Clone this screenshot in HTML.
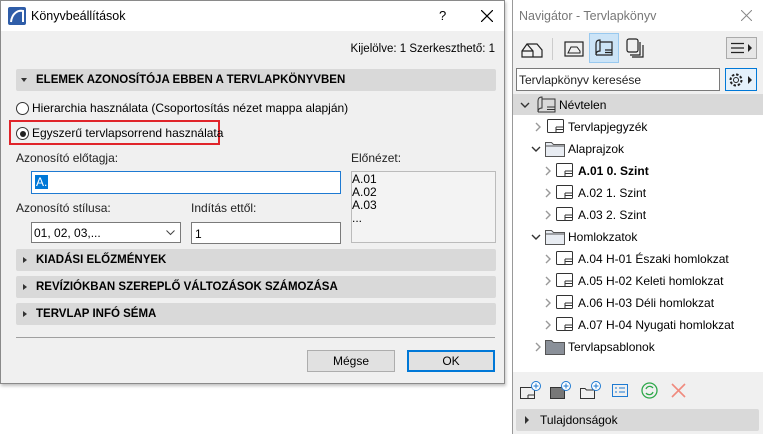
<!DOCTYPE html>
<html><head><meta charset="utf-8"><style>
*{box-sizing:border-box;margin:0;padding:0}
body{width:763px;height:434px;background:#fff;position:relative;overflow:hidden;font-family:"Liberation Sans",sans-serif;font-size:12px;color:#000}
.a{position:absolute}
.t{position:absolute;white-space:nowrap;line-height:14px}
.sec{position:absolute;left:16px;width:480px;height:22px;background:#d9d9d9;border-radius:2px;font-weight:bold;font-size:11.5px;line-height:22px;padding-left:20px}
.tri{position:absolute;left:7px;top:8px;width:0;height:0;border-top:3px solid transparent;border-bottom:3px solid transparent;border-left:4px solid #333}
.trd{position:absolute;left:5px;top:9px;width:0;height:0;border-left:3.5px solid transparent;border-right:3.5px solid transparent;border-top:4px solid #333}
.row{position:absolute;height:22px;line-height:22px;white-space:nowrap;font-size:12px}
</style></head><body>
<svg width="0" height="0" style="position:absolute"><defs>
<symbol id="pg" viewBox="0 0 17 15"><rect x="0.5" y="0.5" width="16" height="13" rx="1" stroke="#333" fill="#fff"/><path d="M9 8H16.5M9 10.5H16.5M9 8V13.5" stroke="#333" fill="none"/></symbol>
<symbol id="fd" viewBox="0 0 20 16"><path d="M0.5 15.5V1.5H6.5L8.5 3.5H19.5V15.5Z M0.5 5H19.5" stroke="#555" fill="#e8ecf2"/></symbol>
<symbol id="cr" viewBox="0 0 8 10"><path d="M2 1L6 5L2 9" stroke="#999" stroke-width="1.4" fill="none"/></symbol>
<symbol id="cd" viewBox="0 0 10 8"><path d="M1 2L5 6L9 2" stroke="#333" stroke-width="1.4" fill="none"/></symbol>
</defs></svg>
<!-- Dialog -->
<div class="a" style="left:0;top:0;width:505px;height:384px;border:1px solid #8a8a8a;background:#f0f0f0;box-shadow:1px 2px 3px rgba(0,0,0,.25)"></div>
<div class="a" style="left:1px;top:1px;width:503px;height:30px;background:#fff"></div>
<svg class="a" style="left:8px;top:7px" width="18" height="18"><rect width="18" height="18" rx="2" fill="#2f5da8"/><path d="M3 15 C4 6 10 3 15 4 L15 15" stroke="#fff" stroke-width="2" fill="none"/></svg>
<div class="t" style="left:31px;top:9px;font-size:12.5px">Könyvbeállítások</div>
<div class="t" style="left:439px;top:9px;font-size:13px">?</div>
<svg class="a" style="left:481px;top:10px" width="12" height="12"><path d="M0 0L12 12M12 0L0 12" stroke="#000" stroke-width="1.2"/></svg>
<div class="t" style="right:268px;top:42px;font-size:11.5px">Kijelölve: 1 Szerkeszthető: 1</div>
<div class="sec" style="top:69px"><div class="trd"></div>ELEMEK AZONOSÍTÓJA EBBEN A TERVLAPKÖNYVBEN</div>
<div class="a" style="left:16px;top:102px;width:13px;height:13px;border:1px solid #333;border-radius:50%;background:#fff"></div>
<div class="t" style="left:32px;top:101px;font-size:12px">Hierarchia használata (Csoportosítás nézet mappa alapján)</div>
<div class="a" style="left:9px;top:120px;width:211px;height:25px;border:2px solid #e0242a"></div>
<div class="a" style="left:16px;top:127px;width:13px;height:13px;border:1px solid #333;border-radius:50%;background:#fff"></div>
<div class="a" style="left:19.5px;top:130.5px;width:6px;height:6px;border-radius:50%;background:#222"></div>
<div class="t" style="left:32px;top:126px;font-size:12px">Egyszerű tervlapsorrend használata</div>
<div class="t" style="left:16px;top:151px;color:#222">Azonosító előtagja:</div>
<div class="t" style="left:351px;top:151px;color:#222">Előnézet:</div>
<div class="a" style="left:31px;top:171px;width:310px;height:23px;border:1px solid #1e7ad2;background:#fff"></div>
<div class="t" style="left:35px;top:175px;background:#0078d7;color:#fff;padding:0 1px">A.</div>
<div class="a" style="left:351px;top:171px;width:145px;height:72px;border:1px solid #bbb;background:#f3f3f3"></div>
<div class="t" style="left:352px;top:173px;line-height:13px">A.01<br>A.02<br>A.03<br>...</div>
<div class="t" style="left:16px;top:201px;color:#222">Azonosító stílusa:</div>
<div class="t" style="left:191px;top:201px;color:#222">Indítás ettől:</div>
<div class="a" style="left:31px;top:222px;width:150px;height:21px;border:1px solid #7a7a7a;background:#fff"></div>
<div class="t" style="left:34px;top:226px">01, 02, 03,...</div>
<svg class="a" style="left:166px;top:230px" width="9" height="6"><path d="M0.5 0.5L4.5 4.5L8.5 0.5" stroke="#444" fill="none"/></svg>
<div class="a" style="left:191px;top:222px;width:150px;height:22px;border:1px solid #7a7a7a;background:#fff"></div>
<div class="t" style="left:195px;top:227px">1</div>
<div class="sec" style="top:249px"><div class="tri"></div>KIADÁSI ELŐZMÉNYEK</div>
<div class="sec" style="top:276px"><div class="tri"></div>REVÍZIÓKBAN SZEREPLŐ VÁLTOZÁSOK SZÁMOZÁSA</div>
<div class="sec" style="top:303px"><div class="tri"></div>TERVLAP INFÓ SÉMA</div>
<div class="a" style="left:16px;top:337px;width:479px;height:1px;background:#a0a0a0"></div>
<div class="a" style="left:307px;top:350px;width:88px;height:22px;border:1px solid #adadad;background:#e1e1e1;text-align:center;line-height:20px">Mégse</div>
<div class="a" style="left:407px;top:350px;width:88px;height:22px;border:2px solid #0078d7;background:#e1e1e1;text-align:center;line-height:18px">OK</div>

<!-- Navigator -->
<div class="a" style="left:512px;top:0;width:251px;height:434px;border-left:1px solid #999;background:#f0f0f0"></div>
<div class="a" style="left:513px;top:0;width:250px;height:31px;background:#fff"></div>
<div class="t" style="left:519px;top:9px;font-size:12.5px;color:#777">Navigátor - Tervlapkönyv</div>
<svg class="a" style="left:741px;top:10px" width="11" height="11"><path d="M0 0L11 11M11 0L0 11" stroke="#888" stroke-width="1"/></svg>
<svg class="a" style="left:521px;top:40px" width="22" height="18"><path d="M1 11 L6 4 L16 4 L21 10 L21 17 L1 17 Z M6 4 L12 11 L12 17 M1 11 L12 11" stroke="#222" fill="none" stroke-width="1.2"/></svg>
<div class="a" style="left:552px;top:38px;width:1px;height:22px;background:#ccc"></div>
<svg class="a" style="left:564px;top:40px" width="20" height="18"><rect x="1" y="2" width="18" height="14" stroke="#222" fill="none" stroke-width="1.2"/><path d="M4 13 L7 7 L13 7 L16 11 L16 13 Z" stroke="#222" fill="none"/></svg>
<div class="a" style="left:589px;top:33px;width:30px;height:30px;background:#cce4f7;border:1px solid #99c9ef"></div>
<svg class="a" style="left:594px;top:39px" width="20" height="18"><path d="M2 16 L2 5 Q2 1 6 1 L6 12 Q2 12 2 16 Z M6 3 L18 3 L18 16 L2 16 M11 11 L18 11 M11 13.5 L18 13.5" stroke="#222" fill="none" stroke-width="1.2"/></svg>
<svg class="a" style="left:626px;top:38px" width="18" height="20"><rect x="1" y="1" width="11" height="13" rx="2" stroke="#222" fill="none" stroke-width="1.2"/><path d="M4 17 L14 17 L14 4 M6 19 L17 19 L17 7" stroke="#222" fill="none" stroke-width="1.2"/></svg>
<div class="a" style="left:726px;top:37px;width:31px;height:22px;border:1px solid #aaa;background:#e6e6e6"></div>
<svg class="a" style="left:731px;top:42px" width="22" height="12"><path d="M0 1.5H13M0 6H13M0 10.5H13" stroke="#222" stroke-width="1.2"/><path d="M17 2L21 6L17 10Z" fill="#222"/></svg>
<div class="a" style="left:516px;top:68px;width:204px;height:23px;border:1px solid #7a7a7a;background:#fff"></div>
<div class="t" style="left:519px;top:73px;color:#222">Tervlapkönyv keresése</div>
<div class="a" style="left:725px;top:68px;width:32px;height:23px;border:1px solid #0078d7;background:#e5f1fb"></div>
<svg class="a" style="left:728px;top:71px" width="27" height="18"><circle cx="8" cy="9" r="5.5" stroke="#222" fill="none" stroke-dasharray="2.5 1.8" stroke-width="2"/><circle cx="8" cy="9" r="2.5" stroke="#222" fill="none"/><path d="M20 5L24 9L20 13Z" fill="#222"/></svg>
<div class="a" style="left:513px;top:94px;width:250px;height:278px;background:#fff"></div>
<div class="a" style="left:513px;top:94px;width:250px;height:21px;background:#d9d9d9"></div>
<svg class="a" style="left:520px;top:101px" width="10" height="8"><use href="#cd"/></svg>
<svg class="a" style="left:536px;top:96px" width="20" height="17"><path d="M2 16 L2 5 Q2 1 6 1 L6 12 Q2 12 2 16 Z M6 3 L19 3 L19 16 L2 16 M11 11 L19 11 M11 13.5 L19 13.5" stroke="#333" fill="none"/></svg>
<div class="row" style="left:559px;top:94px">Névtelen</div>
<svg class="a" style="left:534px;top:122px" width="8" height="10"><use href="#cr"/></svg>
<svg class="a" style="left:547px;top:119px" width="17" height="15"><use href="#pg"/></svg>
<div class="row" style="left:568px;top:116px">Tervlapjegyzék</div>
<svg class="a" style="left:531px;top:145px" width="10" height="8"><use href="#cd"/></svg>
<svg class="a" style="left:545px;top:141px" width="20" height="16"><use href="#fd"/></svg>
<div class="row" style="left:568px;top:138px">Alaprajzok</div>
<svg class="a" style="left:544px;top:166px" width="8" height="10"><use href="#cr"/></svg><svg class="a" style="left:556px;top:163px" width="17" height="15"><use href="#pg"/></svg><div class="row" style="left:578px;top:160px;font-weight:bold">A.01 0. Szint</div>
<svg class="a" style="left:544px;top:188px" width="8" height="10"><use href="#cr"/></svg><svg class="a" style="left:556px;top:185px" width="17" height="15"><use href="#pg"/></svg><div class="row" style="left:578px;top:182px">A.02 1. Szint</div>
<svg class="a" style="left:544px;top:210px" width="8" height="10"><use href="#cr"/></svg><svg class="a" style="left:556px;top:207px" width="17" height="15"><use href="#pg"/></svg><div class="row" style="left:578px;top:204px">A.03 2. Szint</div>
<svg class="a" style="left:531px;top:233px" width="10" height="8"><use href="#cd"/></svg>
<svg class="a" style="left:545px;top:229px" width="20" height="16"><use href="#fd"/></svg>
<div class="row" style="left:568px;top:226px">Homlokzatok</div>
<svg class="a" style="left:544px;top:254px" width="8" height="10"><use href="#cr"/></svg><svg class="a" style="left:556px;top:251px" width="17" height="15"><use href="#pg"/></svg><div class="row" style="left:578px;top:248px">A.04 H-01 Északi homlokzat</div>
<svg class="a" style="left:544px;top:276px" width="8" height="10"><use href="#cr"/></svg><svg class="a" style="left:556px;top:273px" width="17" height="15"><use href="#pg"/></svg><div class="row" style="left:578px;top:270px">A.05 H-02 Keleti homlokzat</div>
<svg class="a" style="left:544px;top:298px" width="8" height="10"><use href="#cr"/></svg><svg class="a" style="left:556px;top:295px" width="17" height="15"><use href="#pg"/></svg><div class="row" style="left:578px;top:292px">A.06 H-03 Déli homlokzat</div>
<svg class="a" style="left:544px;top:320px" width="8" height="10"><use href="#cr"/></svg><svg class="a" style="left:556px;top:317px" width="17" height="15"><use href="#pg"/></svg><div class="row" style="left:578px;top:314px">A.07 H-04 Nyugati homlokzat</div>
<svg class="a" style="left:534px;top:342px" width="8" height="10"><use href="#cr"/></svg>
<svg class="a" style="left:545px;top:339px" width="20" height="16"><path d="M0.5 15.5V1.5H6.5L8.5 3.5H19.5V15.5Z" stroke="#555" fill="#8a9099"/></svg>
<div class="row" style="left:568px;top:336px">Tervlapsablonok</div>
<!-- bottom toolbar -->
<svg class="a" style="left:520px;top:381px" width="22" height="20"><rect x="0.5" y="6.5" width="14" height="11" stroke="#333" fill="none"/><path d="M8 14H14M8 14V17" stroke="#333"/><circle cx="16" cy="5" r="4.5" stroke="#1e7ad2" fill="#fff"/><path d="M16 2.5V7.5M13.5 5H18.5" stroke="#1e7ad2"/></svg>
<svg class="a" style="left:550px;top:381px" width="22" height="20"><rect x="0.5" y="6.5" width="14" height="11" stroke="#333" fill="#777"/><circle cx="16" cy="5" r="4.5" stroke="#1e7ad2" fill="#fff"/><path d="M16 2.5V7.5M13.5 5H18.5" stroke="#1e7ad2"/></svg>
<svg class="a" style="left:580px;top:381px" width="22" height="20"><path d="M0.5 17.5V7.5H5L6.5 9H14.5V17.5Z" stroke="#333" fill="none"/><circle cx="16" cy="5" r="4.5" stroke="#1e7ad2" fill="#fff"/><path d="M16 2.5V7.5M13.5 5H18.5" stroke="#1e7ad2"/></svg>
<svg class="a" style="left:612px;top:384px" width="16" height="13"><rect x="0.5" y="0.5" width="15" height="12" stroke="#1e7ad2" fill="none"/><path d="M3 4H5M7 4H13M3 8H5M7 8H13" stroke="#1e7ad2"/></svg>
<svg class="a" style="left:641px;top:382px" width="17" height="17"><circle cx="8.5" cy="8.5" r="7.5" stroke="#2ea84a" fill="none" stroke-width="1.3"/><path d="M5 7 A4 4 0 0 1 12 6 M12 10 A4 4 0 0 1 5 11" stroke="#2ea84a" fill="none" stroke-width="1.3"/></svg>
<svg class="a" style="left:671px;top:383px" width="15" height="15"><path d="M1 1L14 14M14 1L1 14" stroke="#f08a7e" stroke-width="1.6"/></svg>
<div class="a" style="left:516px;top:409px;width:243px;height:22px;background:#d9d9d9;border-radius:2px"></div>
<div class="a" style="left:525px;top:416px;width:0;height:0;border-top:4px solid transparent;border-bottom:4px solid transparent;border-left:4px solid #333"></div>
<div class="t" style="left:540px;top:413px;font-size:12px">Tulajdonságok</div>
</body></html>
